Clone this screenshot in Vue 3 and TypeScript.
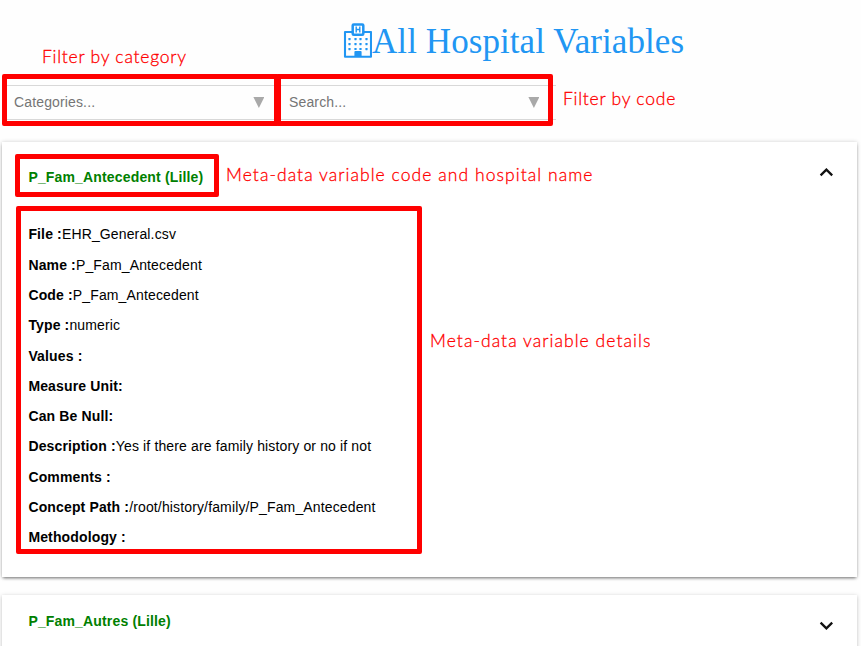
<script setup lang="ts">
interface Field { label: string; value: string }
const fields: Field[] = [
  { label: 'File :', value: 'EHR_General.csv' },
  { label: 'Name :', value: 'P_Fam_Antecedent' },
  { label: 'Code :', value: 'P_Fam_Antecedent' },
  { label: 'Type :', value: 'numeric' },
  { label: 'Values :', value: '' },
  { label: 'Measure Unit:', value: '' },
  { label: 'Can Be Null:', value: '' },
  { label: 'Description :', value: 'Yes if there are family history or no if not' },
  { label: 'Comments :', value: '' },
  { label: 'Concept Path :', value: '/root/history/family/P_Fam_Antecedent' },
  { label: 'Methodology :', value: '' },
]
const filters: string[] = ['Categories...', 'Search...']
const dots: number[][] = []
for (const y of [15, 20]) for (const x of [5, 11, 16, 22]) dots.push([x, y])
dots.push([5, 25], [22, 25])
</script>

<template>
  <main class="page">
    <h1 class="title">
      <svg class="hospital" width="29" height="36" viewBox="0 0 29 36">
        <path d="M9 9H2V33.7H28V9H21" fill="none" stroke="#2196f3" stroke-width="2.1" stroke-linejoin="round" />
        <rect x="9.7" y="1.4" width="10.6" height="10.4" rx="1" fill="#fff" stroke="#2196f3" stroke-width="2.5" />
        <path d="M13.2 3.6V9.4M16.8 3.6V9.4M13.2 6.5H16.8" stroke="#2196f3" stroke-width="1.4" />
        <rect v-for="([x, y], i) in dots" :key="i" :x="x + 0.4" :y="y" width="2.2" height="2.2" rx="0.4" fill="#2196f3" />
        <path d="M11.4 34V29Q11.4 28 12.4 28H17.6Q18.6 28 18.6 29V34Z" fill="#2196f3" />
        <path d="M11.4 25H13.6V27H11.4ZM16.4 25H18.6V27H16.4Z" fill="#2196f3" />
      </svg>
      <span>All Hospital Variables</span>
    </h1>

    <div class="filters">
      <div v-for="f in filters" :key="f" class="select">
        <span>{{ f }}</span>
        <svg width="11" height="11" viewBox="0 0 11 11"><path d="M0 0H11L5.5 11Z" fill="#a9a9a9" /></svg>
      </div>
    </div>

    <section class="card open">
      <header class="head">
        <span class="code">P_Fam_Antecedent (Lille)</span>
        <svg class="chev" width="14" height="9" viewBox="0 0 14 9"><path d="M1.6 7.4L7.4 1.6L13.2 7.4" /></svg>
      </header>
      <div class="fields">
        <p v-for="f in fields" :key="f.label"><b>{{ f.label }}</b><span>{{ f.value }}</span></p>
      </div>
    </section>

    <section class="card">
      <header class="head second">
        <span class="code">P_Fam_Autres (Lille)</span>
        <svg class="chev" width="14" height="9" viewBox="0 0 14 9"><path d="M1.6 1.6L7.4 7.4L13.2 1.6" /></svg>
      </header>
    </section>

    <div class="mark mark-category"></div>
    <div class="mark mark-search"></div>
    <div class="mark mark-code"></div>
    <div class="mark mark-details"></div>
    <span class="note note-category">Filter by category</span>
    <span class="note note-search">Filter by code</span>
    <span class="note note-code">Meta-data variable code and hospital name</span>
    <span class="note note-details">Meta-data variable details</span>
  </main>
</template>

<style>
body { margin: 0; background: #fefefe; overflow: hidden; }
</style>

<style scoped>
.page {
  position: relative;
  box-sizing: border-box;
  height: 646px;
  padding: 20px 4px 0 2px;
  overflow: hidden;
  background: #fefefe;
  font: 14px "Liberation Sans", Arial, sans-serif;
  letter-spacing: 0.14px;
  color: #000;
}
.title {
  display: flex;
  align-items: center;
  height: 42px;
  margin: 0 0 0 341px;
  color: #2196f3;
  font: 400 35px/42px "Liberation Serif", "Times New Roman", serif;
  letter-spacing: 0.08px;
  white-space: nowrap;
}
.title span { padding-top: 1px; }
.filters { display: flex; margin: 23px 0 21.5px 4px; }
.select {
  display: flex;
  align-items: center;
  justify-content: space-between;
  box-sizing: border-box;
  width: 275px;
  height: 35px;
  padding: 0 16.6px 0 8px;
  border-top: 1px solid #d8d8d8;
  border-bottom: 1px solid #d8d8d8;
  color: #757575;
}
.select span { padding-bottom: 2px; }
.select path { transform: translateX(0.4px); }
.card {
  width: 855px;
  height: 100px;
  background: #fff;
  box-shadow: 0 1px 4px rgba(0, 0, 0, 0.25);
}
.open {
  height: 435.5px;
  margin-bottom: 18px;
  box-shadow: 0 2px 3px -1px rgba(0, 0, 0, 0.5), 0 0 4px rgba(0, 0, 0, 0.18);
}
.head {
  display: flex;
  justify-content: space-between;
  align-items: flex-start;
  height: 77.9px;
  box-sizing: border-box;
  padding: 25px 24px 0 26.4px;
}
.head .chev { margin-top: 1px; }
.head.second { padding-top: 16px; }
.head.second .chev { margin-top: 10px; }
.code { color: #008000; font-weight: 700; line-height: 20px; letter-spacing: 0.16px; }
.chev { fill: none; stroke: #111; stroke-width: 2.3; }
.fields { padding-left: 26.4px; }
.fields p { height: 30.3px; margin: 0; line-height: 30px; white-space: nowrap; }
.mark { position: absolute; box-sizing: border-box; border: 5px solid #f00; border-radius: 2px; }
.mark-category { left: 2px; top: 74px; width: 277px; height: 52px; }
.mark-search { left: 276px; top: 74px; width: 277px; height: 52px; }
.mark-code { left: 15px; top: 154px; width: 204px; height: 43px; }
.mark-details { left: 16px; top: 206px; width: 406px; height: 348px; }
.note {
  position: absolute;
  color: #f00;
  font: 300 17.5px/24px Lato, "Open Sans", sans-serif;
  -webkit-text-stroke: 0.3px #f00;
  white-space: nowrap;
}
.note-category { left: 42px; top: 45px; letter-spacing: 0.76px; }
.note-search { left: 563px; top: 87px; letter-spacing: 0.76px; }
.note-code { left: 226px; top: 163px; letter-spacing: 1.06px; }
.note-details { left: 430px; top: 329px; letter-spacing: 1.06px; }
</style>
